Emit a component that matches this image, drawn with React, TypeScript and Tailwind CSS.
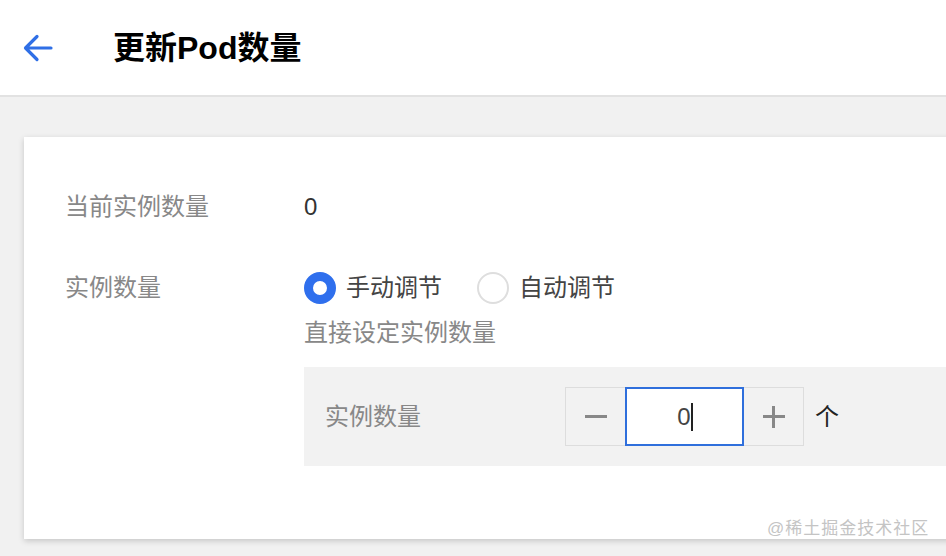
const font = { fontFamily: '"Liberation Sans", "Noto Sans CJK SC", sans-serif' };

function BackArrow() {
  return (
    <svg width="30" height="28" viewBox="0 0 30 28" fill="none">
      <path
        d="M28 14H3M14 2.5L2.5 14L14 25.5"
        stroke="#2f6fe6"
        strokeWidth="3.2"
        strokeLinecap="round"
        strokeLinejoin="round"
      />
    </svg>
  );
}

export default function App() {
  return (
    <div className="w-[946px] h-[556px] overflow-hidden bg-[#f1f1f1]" style={font}>
      {/* Header */}
      <div className="h-[97px] bg-white border-b-2 border-[#e2e2e2] flex items-center">
        <div className="pl-[23px] pt-[1px] w-[113px] flex items-center">
          <BackArrow />
        </div>
        <div className="text-[32px] font-bold text-black leading-none">更新Pod数量</div>
      </div>

      {/* Card */}
      <div className="pl-6 pt-[40px]">
        <div className="relative bg-white h-[402px] mr-[-20px] shadow-[0_2px_6px_rgba(0,0,0,0.18)] pl-[41px] pt-[54px]">
          {/* Current count */}
          <div className="flex items-center h-8">
            <div className="w-[239px] text-[24px] text-[#888888]">当前实例数量</div>
            <div className="text-[24px] text-[#333333]">0</div>
          </div>

          {/* Instance count */}
          <div className="flex mt-[49px]">
            <div className="w-[239px] h-8 flex items-center text-[24px] text-[#888888]">实例数量</div>
            <div className="flex-1">
              <div className="flex items-center h-8">
                <span className="w-8 h-8 rounded-full border-[9px] border-[#2f6fed] bg-white" />
                <span className="ml-[10px] text-[24px] text-[#444444]">手动调节</span>
                <span className="ml-[35px] w-8 h-8 rounded-full border-2 border-[#dedede] bg-white" />
                <span className="ml-[10px] text-[24px] text-[#444444]">自动调节</span>
              </div>
              <div className="mt-[13px] h-8 flex items-center text-[24px] text-[#888888]">直接设定实例数量</div>

              <div className="mt-[18px] bg-[#f2f2f2] py-5 pl-[21px] flex items-center">
                <div className="w-[240px] text-[24px] text-[#888888]">实例数量</div>
                <div className="flex items-stretch h-[59px]">
                  <div className="w-[60px] border border-[#dddddd] border-r-0 flex items-center justify-center bg-[#f2f2f2]">
                    <span className="w-[22px] h-[3px] bg-[#888888]" />
                  </div>
                  <div className="w-[119px] border-2 border-[#2f6fdc] bg-white flex items-center justify-center">
                    <span className="text-[24px] text-[#444444] ml-[1px]">0</span>
                    <span className="w-[2px] h-[28px] bg-[#222222]" />
                  </div>
                  <div className="w-[60px] border border-[#dddddd] border-l-0 flex items-center justify-center relative bg-[#f2f2f2]">
                    <span className="absolute w-[22px] h-[3px] bg-[#888888]" />
                    <span className="absolute w-[3px] h-[22px] bg-[#888888]" />
                  </div>
                </div>
                <div className="ml-[11px] text-[24px] text-[#222222]">个</div>
              </div>
            </div>
          </div>

          {/* Watermark */}
          <div className="absolute left-[743px] bottom-[-2px] text-[17px] text-[#c4c4c4] tracking-[1px]">
            @稀土掘金技术社区
          </div>
        </div>
      </div>
    </div>
  );
}
